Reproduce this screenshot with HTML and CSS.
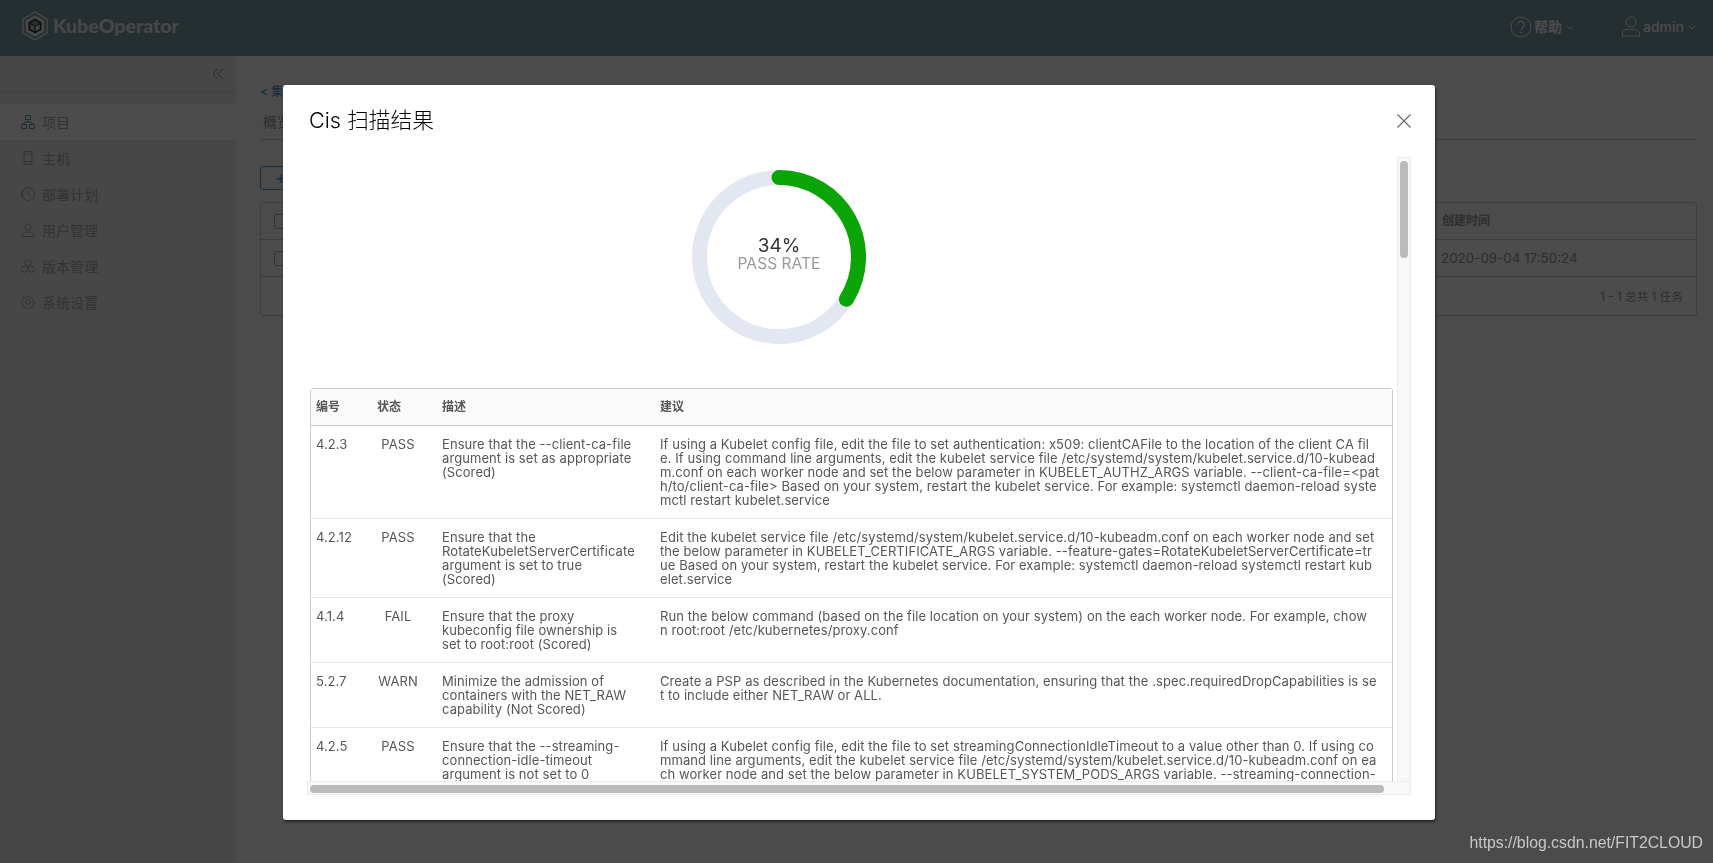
FILE: index.html
```html
<!DOCTYPE html>
<html lang="zh">
<head>
<meta charset="utf-8">
<title>KubeOperator</title>
<link rel="stylesheet" href="styles.css">
</head>
<body>
<header class="topbar">
  <div class="brand">
    <svg class="brand-logo" viewBox="0 0 28 32" width="26" height="30">
      <polygon points="14,1 27,8.500 27,23.500 14,31 1,23.500 1,8.500" fill="none" stroke="currentColor" stroke-width="1.500"/>
      <polygon points="14,4.500 24,10.200 24,21.800 14,27.500 4,21.800 4,10.200" fill="currentColor"/>
      <polygon points="14,8 21,12 21,20 14,24 7,20 7,12" fill="#2e3538"/>
      <polygon points="14,10 19,12.800 14,15.600 9,12.800" fill="currentColor" opacity=".55"/>
      <polygon points="9,14 13.300,16.500 13.300,21.700 9,19.200" fill="currentColor" opacity=".8"/>
      <polygon points="19,14 14.700,16.500 14.700,21.700 19,19.200" fill="currentColor"/>
    </svg>
    <span class="brand-name">KubeOperator</span>
  </div>
  <nav class="top-actions">
    <div class="top-item top-help">
      <svg class="top-icon" viewBox="0 0 22 22" width="22" height="22">
        <circle cx="11" cy="11" r="10" fill="none" stroke="currentColor" stroke-width="1"/>
        <path d="M7.800 8.500a3.200 3.200 0 1 1 4.900 2.700c-1 .7-1.700 1.200-1.700 2.700" fill="none" stroke="currentColor" stroke-width="1.100"/>
        <circle cx="11" cy="16.300" r=".8" fill="currentColor"/>
      </svg>
      <span class="top-label top-label-cn">帮助</span>
      <svg class="chev" viewBox="0 0 8 5" width="8" height="5"><path d="M1 1l3 3 3-3" fill="none" stroke="currentColor"/></svg>
    </div>
    <div class="top-item">
      <svg class="top-icon" viewBox="0 0 20 22" width="20" height="22">
        <circle cx="10" cy="6" r="5" fill="none" stroke="currentColor" stroke-width="1"/>
        <path d="M1.500 20v-3c0-2 2.500-3.800 8.500-3.800s8.500 1.800 8.500 3.800v3z" fill="none" stroke="currentColor" stroke-width="1"/>
      </svg>
      <span class="top-label">admin</span>
      <svg class="chev" viewBox="0 0 8 5" width="8" height="5"><path d="M1 1l3 3 3-3" fill="none" stroke="currentColor"/></svg>
    </div>
  </nav>
</header>

<div class="shell">
  <aside class="sidebar">
    <div class="collapse-row">
      <svg viewBox="0 0 12 12" width="12" height="12"><path d="M6 1L1 6l5 5M11 1L6 6l5 5" fill="none" stroke="currentColor"/></svg>
    </div>
    <ul class="menu">
      <li class="menu-item is-active">
        <svg class="menu-icon menu-icon-active" viewBox="0 0 14 14" width="14" height="14"><path d="M4.500.5h5v4h-5zM.5 9.500h5v4h-5zM8.500 9.500h5v4h-5zM3 9.500V7h8v2.500M7 4.500V7" fill="none" stroke="currentColor"/></svg>
        <span>项目</span>
      </li>
      <li class="menu-item">
        <svg class="menu-icon" viewBox="0 0 14 14" width="14" height="14"><path d="M3 .5h8v13H3zM3 3h8M3 10.500h8M6.500 12h1" fill="none" stroke="currentColor"/></svg>
        <span>主机</span>
      </li>
      <li class="menu-item">
        <svg class="menu-icon" viewBox="0 0 14 14" width="14" height="14"><circle cx="7" cy="7" r="6.500" fill="none" stroke="currentColor"/><path d="M7 3v4.500l3 1.500M4 2.500a5 5 0 0 0 0 9" fill="none" stroke="currentColor"/></svg>
        <span>部署计划</span>
      </li>
      <li class="menu-item">
        <svg class="menu-icon" viewBox="0 0 14 14" width="14" height="14"><circle cx="7" cy="4" r="3.200" fill="none" stroke="currentColor"/><path d="M1.500 13.500v-2c0-1.500 2-2.600 5.500-2.600s5.500 1.100 5.500 2.600v2z" fill="none" stroke="currentColor"/></svg>
        <span>用户管理</span>
      </li>
      <li class="menu-item">
        <svg class="menu-icon" viewBox="0 0 14 14" width="14" height="14"><path d="M7 .8l3 1.500v3L7 6.800 4 5.300v-3zM3.700 6.800l3 1.500v3.400l-3 1.500-3-1.500V8.300zM10.300 6.800l3 1.500v3.400l-3 1.500-3-1.500V8.300z" fill="none" stroke="currentColor"/></svg>
        <span>版本管理</span>
      </li>
      <li class="menu-item">
        <svg class="menu-icon" viewBox="0 0 14 14" width="14" height="14"><circle cx="7" cy="7" r="2.300" fill="none" stroke="currentColor"/><path d="M6 .5h2l.4 1.900 1.400.6 1.700-1 1.400 1.400-1 1.700.6 1.400 1.900.4v2l-1.900.4-.6 1.400 1 1.700-1.400 1.400-1.700-1-1.400.6-.4 1.900H6l-.4-1.900-1.400-.6-1.700 1-1.400-1.400 1-1.700-.6-1.400-1.900-.4V6l1.900-.4.6-1.400-1-1.700 1.400-1.400 1.700 1 1.400-.6z" transform="translate(.6 .6) scale(.915)" fill="none" stroke="currentColor"/></svg>
        <span>系统设置</span>
      </li>
    </ul>
  </aside>

  <main class="main">
    <div class="crumb">&lt; 集群</div>
    <div class="tabs"><span class="tab">概览</span></div>
    <button class="add-btn" type="button">+ 添加</button>
    <section class="task-table">
      <div class="task-row task-head">
        <span class="check"></span>
        <span class="task-time">创建时间</span>
      </div>
      <div class="task-row">
        <span class="check"></span>
        <span class="task-time task-date">2020-09-04 17:50:24</span>
      </div>
      <div class="task-foot">1 - 1 总共 1 任务</div>
    </section>
  </main>
</div>

<div class="backdrop"></div>

<div class="modal-layer">
  <div class="modal" role="dialog">
    <div class="modal-head">
      <h3 class="modal-title">Cis 扫描结果</h3>
      <svg class="modal-close" viewBox="0 0 14 14" width="14" height="14"><path d="M.5.5l13 13M13.500.5l-13 13" fill="none" stroke="#666" stroke-width="1.100"/></svg>
    </div>
    <div class="modal-body">
      <div class="viewport">
        <div class="modal-content">
          <div class="rate-wrap">
            <div class="rate">
              <svg viewBox="0 0 174 174" width="174" height="174">
                <circle cx="87" cy="87" r="79.500" fill="none" stroke="#e3e7f2" stroke-width="15"/>
                <path d="M87 7.500A79.500 79.500 0 0 1 154.400 129.200" fill="none" stroke="#0aa505" stroke-width="15" stroke-linecap="round"/>
              </svg>
              <div class="rate-text">
                <div class="rate-num">34%</div>
                <div class="rate-label">PASS RATE</div>
              </div>
            </div>
          </div>
          <table class="cis-table">
            <colgroup>
              <col class="c-id"><col class="c-status"><col class="c-desc"><col class="c-advice">
            </colgroup>
            <thead>
              <tr><th>编号</th><th>状态</th><th>描述</th><th>建议</th></tr>
            </thead>
            <tbody>
              <tr>
                <td>4.2.3</td><td class="st">PASS</td>
                <td>Ensure that the --client-ca-file<br>argument is set as appropriate<br>(Scored)</td>
                <td>If using a Kubelet config file, edit the file to set authentication: x509: clientCAFile to the location of the client CA fil<br>e. If using command line arguments, edit the kubelet service file /etc/systemd/system/kubelet.service.d/10-kubead<br>m.conf on each worker node and set the below parameter in KUBELET_AUTHZ_ARGS variable. --client-ca-file=&lt;pat<br>h/to/client-ca-file&gt; Based on your system, restart the kubelet service. For example: systemctl daemon-reload syste<br>mctl restart kubelet.service</td>
              </tr>
              <tr>
                <td>4.2.12</td><td class="st">PASS</td>
                <td>Ensure that the<br>RotateKubeletServerCertificate<br>argument is set to true<br>(Scored)</td>
                <td>Edit the kubelet service file /etc/systemd/system/kubelet.service.d/10-kubeadm.conf on each worker node and set<br>the below parameter in KUBELET_CERTIFICATE_ARGS variable. --feature-gates=RotateKubeletServerCertificate=tr<br>ue Based on your system, restart the kubelet service. For example: systemctl daemon-reload systemctl restart kub<br>elet.service</td>
              </tr>
              <tr>
                <td>4.1.4</td><td class="st">FAIL</td>
                <td>Ensure that the proxy<br>kubeconfig file ownership is<br>set to root:root (Scored)</td>
                <td>Run the below command (based on the file location on your system) on the each worker node. For example, chow<br>n root:root /etc/kubernetes/proxy.conf</td>
              </tr>
              <tr>
                <td>5.2.7</td><td class="st">WARN</td>
                <td>Minimize the admission of<br>containers with the NET_RAW<br>capability (Not Scored)</td>
                <td>Create a PSP as described in the Kubernetes documentation, ensuring that the .spec.requiredDropCapabilities is se<br>t to include either NET_RAW or ALL.</td>
              </tr>
              <tr>
                <td>4.2.5</td><td class="st">PASS</td>
                <td>Ensure that the --streaming-<br>connection-idle-timeout<br>argument is not set to 0</td>
                <td>If using a Kubelet config file, edit the file to set streamingConnectionIdleTimeout to a value other than 0. If using co<br>mmand line arguments, edit the kubelet service file /etc/systemd/system/kubelet.service.d/10-kubeadm.conf on ea<br>ch worker node and set the below parameter in KUBELET_SYSTEM_PODS_ARGS variable. --streaming-connection-</td>
              </tr>
            </tbody>
          </table>
        </div>
      </div>
      <div class="vbar"><div class="vthumb"></div></div>
      <div class="hbar"><div class="hthumb"></div></div>
    </div>
  </div>
</div>

<div class="watermark">https://blog.csdn.net/FIT2CLOUD</div>
</body>
</html>
```
FILE: styles.css
```css
* { box-sizing: border-box; }
html, body { height: 100%; }
body {
  margin: 0;
  overflow: hidden;
  background: #fafafa;
  font-family: Inter, "Noto Sans CJK SC", sans-serif;
  color: #565656;
}

/* app chrome, sits under the backdrop */
.topbar {
  height: 56px;
  background: #7c9aa4;
  color: #fff;
  display: flex;
  align-items: center;
  justify-content: space-between;
}
.brand { display: flex; align-items: center; padding-left: 22px; gap: 5px; padding-bottom: 5px; }
.brand-logo { color: #eee; }
.brand-name {
  font-family: Lato, sans-serif;
  font-weight: 900;
  font-size: 19.500px;
  color: #eee;
}
.top-actions { display: flex; align-items: center; padding: 0 17px 2px 0; gap: 47px; }
.top-item { display: flex; align-items: center; gap: 3px; }
.top-icon { margin-right: -2px; }
.top-label { font-size: 14px; font-weight: 500; margin: 0 0 2px 1px; }
.top-label-cn { font-weight: 700; }
.chev { margin-left: 1px; }

.shell { display: flex; height: 807px; }
.sidebar { width: 236px; flex: none; background: #eee; color: #aaa; }
.collapse-row {
  height: 37px;
  display: flex;
  align-items: center;
  justify-content: flex-end;
  padding-right: 12px;
  border-bottom: 1px solid #dcdcdc;
  margin-bottom: 11px;
  color: #8a8a8a;
}
.menu { list-style: none; margin: 0; padding: 0; }
.menu-item {
  height: 36px;
  display: flex;
  align-items: center;
  gap: 7px;
  padding-left: 21px;
  font-size: 14px;
}
.menu-item.is-active { background: #fff; }
.menu-icon { color: #aaa; }
.menu-icon-active { color: #5f93b0; }

.main { flex: 1; padding: 0 16px 0 24px; }
.crumb { margin-top: 28px; height: 16px; font-size: 12px; line-height: 16px; color: #3f8cc0; }
.tabs { height: 40px; border-bottom: 1px solid #ccc; padding: 11px 3px 0; }
.tab { font-size: 14px; color: #999; }
.add-btn {
  display: block;
  margin: 26px 0 12px;
  width: 100px;
  height: 24px;
  padding: 0 0 0 14px;
  text-align: left;
  font: 18px Inter, "Noto Sans CJK SC", sans-serif;
  line-height: 20px;
  color: #4f9cc8;
  background: none;
  border: 1px solid #4f9cc8;
  border-radius: 3px;
}
.task-table { border: 1px solid #ccc; border-radius: 3px; background: #fff; color: #999; font-size: 13px; }
.task-row {
  height: 37px;
  display: flex;
  align-items: center;
  justify-content: space-between;
  border-bottom: 1px solid #ccc;
  padding-left: 13px;
}
.task-head { background: #fafafa; font-weight: 700; font-size: 12px; }
.task-head .task-time { padding: 0 0 3px 1px; }
.check { width: 15px; height: 15px; border: 1px solid #aaa; border-radius: 3px; }
.task-time { width: 255px; }
.task-date { font-size: 13.400px; padding-bottom: 1px; }
.task-foot { height: 38px; display: flex; align-items: center; justify-content: flex-end; padding: 0 13px 2px 0; font-size: 11.700px; }

/* overlay layers */
.backdrop { position: fixed; inset: 0; background: rgba(0, 0, 0, .7); }
.modal-layer { position: fixed; inset: 0; padding: 85px 278px 0 283px; }
.modal {
  width: 1152px;
  height: 735px;
  background: #fff;
  border-radius: 3px;
  box-shadow: 1px 2px 3px rgba(0, 0, 0, .5);
  display: flex;
  flex-direction: column;
}
.modal-head {
  height: 72px;
  flex: none;
  display: flex;
  align-items: flex-start;
  justify-content: space-between;
  padding: 0 24px 0 26px;
}
.modal-title {
  margin: 20px 0 0;
  font-size: 21.700px;
  line-height: 30px;
  font-weight: 300;
  color: #000;
}
.modal-close { margin-top: 29px; }

.modal-body {
  margin: 0 24px 25px;
  height: 638px;
  display: grid;
  grid-template-columns: 1090px 14px;
  grid-template-rows: 624px 14px;
}
.viewport { overflow: hidden; }
.vbar {
  background: #f8f8f8;
  border: 1px solid #ececec;
  border-bottom: 0;
  padding: 3px 2px 0;
}
.vthumb { width: 8px; height: 97px; background: #bbb; border-radius: 4px; }
.hbar {
  grid-column: 1 / 3;
  background: #f8f8f8;
  border: 1px solid #ececec;
  padding: 3px 2px 0;
}
.hthumb { width: 1074px; height: 8px; background: #bbb; border-radius: 4px; }

.modal-content { width: 1098px; padding: 13px 0 0 3px; }

.rate-wrap { width: 938px; display: flex; justify-content: center; margin-bottom: 44px; }
.rate { position: relative; width: 174px; height: 174px; }
.rate-text {
  position: absolute;
  inset: 0;
  display: flex;
  flex-direction: column;
  align-items: center;
  justify-content: center;
  text-align: center;
  padding-bottom: 6px;
}
.rate-num { font-size: 19px; line-height: 20px; color: #333; font-weight: 400; }
.rate-label { font-size: 15.600px; line-height: 16px; color: #9a9a9a; }

.cis-table {
  width: 1083px;
  table-layout: fixed;
  border-collapse: separate;
  border-spacing: 0;
  border: 1px solid #ccc;
  border-radius: 3px;
  font-size: 13px;
  line-height: 14px;
  letter-spacing: .08px;
  color: #565656;
  white-space: nowrap;
}
.c-id { width: 60px; }
.c-status { width: 65px; }
.c-desc { width: 218px; }
.cis-table th {
  height: 37px;
  padding: 0 6px;
  text-align: left;
  font-size: 12px;
  font-weight: 700;
  background: #fafafa;
  border-bottom: 1px solid #ccc;
}
.cis-table td {
  padding: 11px 6px;
  vertical-align: top;
  border-bottom: 1px solid #e8e8e8;
}
.cis-table th:first-child, .cis-table td:first-child { padding-left: 5px; }
.cis-table td.st { text-align: center; padding-right: 17px; }

.watermark {
  position: fixed;
  right: 10px;
  bottom: 11px;
  font: 15.800px "Liberation Sans", sans-serif;
  line-height: 18px;
  color: #c8c8c8;
}
```
